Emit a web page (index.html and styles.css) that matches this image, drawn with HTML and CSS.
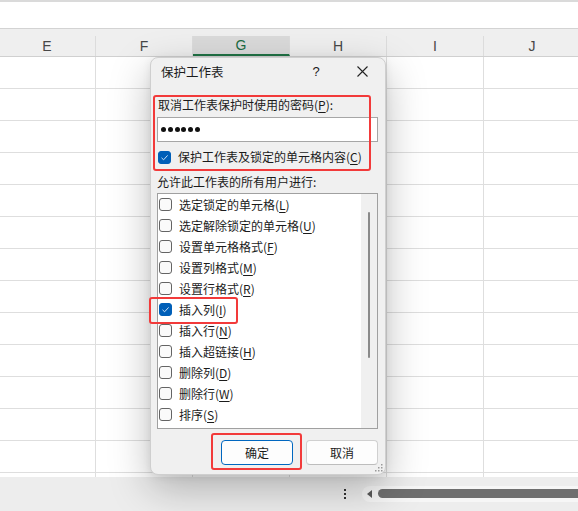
FILE: index.html
```html
<!DOCTYPE html>
<html lang="zh-CN">
<head>
<meta charset="utf-8">
<title>保护工作表</title>
<link rel="stylesheet" href="styles.css">
</head>
<body>
<div class="app">
  <div class="topbar"></div>
  <div class="colhead">
    <div class="col">E</div>
    <div class="col">F</div>
    <div class="col sel">G</div>
    <div class="col">H</div>
    <div class="col">I</div>
    <div class="col">J</div>
  </div>
  <div class="grid"></div>
  <div class="status">
    <div class="more"><i></i><i></i><i></i></div>
    <div class="hscroll">
      <svg class="arrow" width="6" height="8" viewBox="0 0 6 8"><path d="M5 0 L0 4 L5 8 Z" fill="#5a5a5a"/></svg>
      <div class="thumb"></div>
    </div>
  </div>

  <div class="dialog">
    <div class="titlebar">
      <span class="title">保护工作表</span>
      <span class="help">?</span>
      <span class="close">
        <svg width="11" height="11" viewBox="0 0 11 11"><path d="M0.5 0.5 L10.5 10.5 M10.5 0.5 L0.5 10.5" stroke="#222" stroke-width="1.1" fill="none"/></svg>
      </span>
    </div>
    <div class="label pwlabel">取消工作表保护时使用的密码(<u>P</u>):</div>
    <div class="input"><i></i><i></i><i></i><i></i><i></i><i></i></div>
    <div class="chkrow protect">
      <span class="box on"><svg width="11" height="11" viewBox="0 0 11 11"><path d="M2.5 5.8 L4.6 7.8 L8.6 3.4" stroke="#cfe3f7" stroke-width="1" fill="none"/></svg></span>
      <span>保护工作表及锁定的单元格内容(<u>C</u>)</span>
    </div>
    <div class="label allow">允许此工作表的所有用户进行:</div>
    <div class="list">
      <div class="items">
        <div class="chkrow"><span class="box"></span><span>选定锁定的单元格(<u>L</u>)</span></div>
        <div class="chkrow"><span class="box"></span><span>选定解除锁定的单元格(<u>U</u>)</span></div>
        <div class="chkrow"><span class="box"></span><span>设置单元格格式(<u>F</u>)</span></div>
        <div class="chkrow"><span class="box"></span><span>设置列格式(<u>M</u>)</span></div>
        <div class="chkrow"><span class="box"></span><span>设置行格式(<u>R</u>)</span></div>
        <div class="chkrow"><span class="box on"><svg width="11" height="11" viewBox="0 0 11 11"><path d="M2.5 5.8 L4.6 7.8 L8.6 3.4" stroke="#cfe3f7" stroke-width="1" fill="none"/></svg></span><span>插入列(<u>I</u>)</span></div>
        <div class="chkrow"><span class="box"></span><span>插入行(<u>N</u>)</span></div>
        <div class="chkrow"><span class="box"></span><span>插入超链接(<u>H</u>)</span></div>
        <div class="chkrow"><span class="box"></span><span>删除列(<u>D</u>)</span></div>
        <div class="chkrow"><span class="box"></span><span>删除行(<u>W</u>)</span></div>
        <div class="chkrow"><span class="box"></span><span>排序(<u>S</u>)</span></div>
      </div>
      <div class="vscroll"><div class="vthumb"></div></div>
    </div>
    <div class="buttons">
      <button class="btn primary">确定</button>
      <button class="btn">取消</button>
    </div>
    <svg class="grip" width="9" height="9" viewBox="0 0 9 9">
      <rect x="7" y="1" width="1.5" height="1.5" fill="#9a9a9a"/>
      <rect x="4" y="4" width="1.5" height="1.5" fill="#9a9a9a"/>
      <rect x="7" y="4" width="1.5" height="1.5" fill="#9a9a9a"/>
      <rect x="1" y="7" width="1.5" height="1.5" fill="#9a9a9a"/>
      <rect x="4" y="7" width="1.5" height="1.5" fill="#9a9a9a"/>
      <rect x="7" y="7" width="1.5" height="1.5" fill="#9a9a9a"/>
    </svg>
    <div class="mark mark-pw"></div>
    <div class="mark mark-col"></div>
    <div class="mark mark-ok"></div>
  </div>
</div>
</body>
</html>
```

FILE: styles.css
```css
* { box-sizing: border-box; }
html, body { margin: 0; padding: 0; }
body {
  width: 578px;
  height: 511px;
  overflow: hidden;
  background: #fff;
  font-family: "Noto Sans CJK SC", "Noto Sans", sans-serif;
  color: #1b1b1b;
}
.app {
  position: relative;
  width: 578px;
  height: 511px;
  display: flex;
  flex-direction: column;
  overflow: hidden;
}
.topbar {
  height: 28px;
  flex: none;
  border-top: 2px solid #dadada;
  background: #fff;
}
.colhead {
  flex: none;
  display: flex;
  background: #efefef;
  border-top: 1px solid #d3d3d3;
  border-bottom: 1px solid #d0d0d0;
  padding-top: 7px;
  margin-left: -1px;
}
.col {
  flex: none;
  width: 97px;
  height: 20px;
  border-right: 1px solid #dcdcdc;
  text-align: center;
  font-family: "Liberation Sans", "DejaVu Sans", sans-serif;
  font-size: 14px;
  line-height: 20px;
  color: #474747;
}
.col.sel {
  background: #dadada;
  color: #1a6b43;
  border-bottom: 2px solid #217346;
  line-height: 19px;
}
.grid {
  flex: 1;
  background-color: #fff;
  background-image:
    repeating-linear-gradient(to bottom, transparent 0 31px, #dedede 31px 32px),
    repeating-linear-gradient(to right, transparent 0 95px, #dedede 95px 96px, transparent 96px 97px);
}
.status {
  flex: none;
  height: 34px;
  background: #ededed;
  display: flex;
  align-items: center;
  padding-left: 344px;
}
.more {
  width: 3px;
  display: flex;
  flex-direction: column;
  gap: 2px;
  margin-right: 15px;
}
.more i {
  display: block;
  width: 2px;
  height: 2px;
  background: #333;
}
.hscroll {
  flex: 1;
  height: 16px;
  background: #f6f6f6;
  border-radius: 8px 0 0 8px;
  display: flex;
  align-items: center;
  padding-left: 5px;
  margin-top: -1px;
}
.arrow { flex: none; margin-right: 5px; }
.thumb {
  flex: 1;
  height: 9px;
  background: #6f6f6f;
  border-radius: 5px 0 0 5px;
}

/* dialog */
.dialog {
  position: absolute;
  left: 150px;
  top: 57px;
  width: 236px;
  height: 418px;
  background: #f0f0f0;
  border: 1px solid #cfcfcf;
  border-radius: 8px;
  box-shadow: 0 14px 40px rgba(0, 0, 0, 0.26), 0 2px 8px rgba(0, 0, 0, 0.08);
  padding: 0 7px 0 6px;
  font-size: 12px;
  line-height: 16px;
}
.titlebar {
  height: 27px;
  display: flex;
  align-items: center;
  margin-right: 1px;
}
.title { flex: 1; padding-left: 4px; font-size: 12.5px; }
.help {
  width: 30px;
  margin-right: 16px;
  text-align: center;
  font-family: "Liberation Sans", sans-serif;
  font-size: 13px;
}
.close {
  width: 30px;
  display: flex;
  justify-content: center;
}
.label { height: 16px; white-space: nowrap; }
.pwlabel { margin-top: 12px; padding-left: 1px; }
.input {
  margin-top: 4px;
  height: 25px;
  background: #fff;
  border: 1px solid #a6a6a6;
  display: flex;
  align-items: center;
  gap: 1.8px;
  padding-left: 3px;
}
.input i {
  display: block;
  width: 5px;
  height: 5px;
  border-radius: 50%;
  background: #111;
}
.chkrow {
  display: flex;
  align-items: center;
  white-space: nowrap;
}
.protect { margin-top: 7px; height: 16px; padding-left: 1px; }
.protect .box { margin-right: 7px; }
.box {
  flex: none;
  width: 13px;
  height: 13px;
  border: 1px solid #646464;
  border-radius: 3px;
  background: #fafafa;
  margin-right: 7px;
  display: flex;
  align-items: center;
  justify-content: center;
}
.box.on {
  background: #005fb8;
  border-color: #005fb8;
}
u { text-underline-offset: 2px; }
.allow { margin-top: 9px; }
.list {
  margin-top: 3px;
  height: 236px;
  background: #fff;
  border: 1px solid #a0a0a0;
  display: flex;
}
.items {
  flex: 1;
  padding-top: 0;
  padding-left: 1px;
}
.items .chkrow { height: 21px; }
.vscroll {
  width: 16px;
  background: #f0f0f0;
  padding-top: 18px;
  padding-left: 7px;
}
.vthumb {
  width: 2px;
  height: 146px;
  background: #8a8a8a;
  border-radius: 1px;
}
.buttons {
  margin-top: 11px;
  display: flex;
  gap: 13px;
  padding-left: 64px;
}
.btn {
  width: 72px;
  height: 25px;
  background: #fdfdfd;
  border: 1px solid #d0d0d0;
  border-bottom-color: #bdbdbd;
  border-radius: 4px;
  font-family: "Noto Sans CJK SC", sans-serif;
  font-size: 12px;
  color: #1b1b1b;
  padding: 0;
}
.btn.primary { border: 1px solid #0067c0; }
.grip {
  position: absolute;
  right: 2px;
  bottom: 2px;
}
.mark {
  position: absolute;
  border: 2px solid #f23a3a;
  border-radius: 3px;
}
.mark-pw { left: 2px; top: 37px; width: 218px; height: 76px; }
.mark-col { left: -2px; top: 239px; width: 89px; height: 27px; }
.mark-ok { left: 60px; top: 375px; width: 91px; height: 37px; }
```
